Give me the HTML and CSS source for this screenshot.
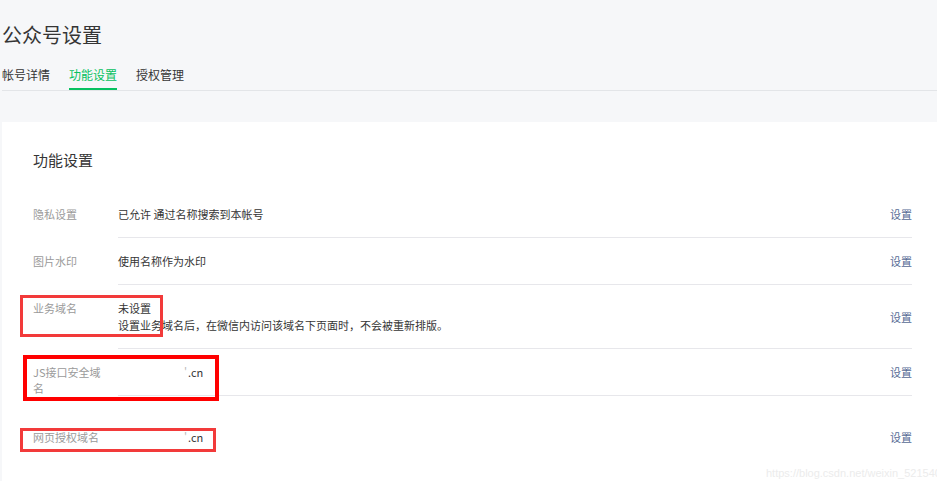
FILE: index.html
```html
<!DOCTYPE html>
<html lang="zh-CN">
<head>
<meta charset="utf-8">
<title>公众号设置</title>
<link rel="stylesheet" href="styles.css">
</head>
<body>
<div class="page">
  <h1 class="title">公众号设置</h1>
  <nav class="tabs">
    <a class="tab">帐号详情</a>
    <a class="tab active">功能设置</a>
    <a class="tab">授权管理</a>
  </nav>
  <section class="card">
    <h2 class="card-title">功能设置</h2>
    <div class="row">
      <div class="label">隐私设置</div>
      <div class="content">
        <div class="value">已允许 通过名称搜索到本帐号</div>
        <a class="link">设置</a>
      </div>
    </div>
    <div class="row">
      <div class="label">图片水印</div>
      <div class="content">
        <div class="value">使用名称作为水印</div>
        <a class="link">设置</a>
      </div>
    </div>
    <div class="row">
      <div class="label">业务域名</div>
      <div class="content">
        <div class="value multi">未设置<br>设置业务域名后，在微信内访问该域名下页面时，不会被重新排版。</div>
        <a class="link">设置</a>
      </div>
    </div>
    <div class="row">
      <div class="label wrap">JS接口安全域名</div>
      <div class="content">
        <div class="value domain"><span class="cut">'</span>.cn</div>
        <a class="link">设置</a>
      </div>
    </div>
    <div class="row last">
      <div class="label">网页授权域名</div>
      <div class="content">
        <div class="value domain"><span class="cut">'</span>.cn</div>
        <a class="link">设置</a>
      </div>
    </div>
  </section>
  <div class="mark mark1"></div>
  <div class="mark mark2"></div>
  <div class="mark mark3"></div>
  <div class="watermark">https://blog.csdn.net/weixin_52154077</div>
</div>
</body>
</html>
```
FILE: styles.css
```css
html, body {
  margin: 0;
  padding: 0;
  background: #f6f7f9;
  height: 100%;
  overflow: hidden;
}
body {
  font-family: "Noto Sans CJK SC", "Noto Sans", "Liberation Sans", sans-serif;
  color: #353535;
}
.page {
  position: relative;
  display: flex;
  flex-direction: column;
  padding: 21px 0 0 2px;
  height: 481px;
  box-sizing: border-box;
  overflow: hidden;
}
.title {
  margin: 0;
  font-size: 20px;
  line-height: 28px;
  font-weight: 400;
  color: #353535;
}
.tabs {
  display: flex;
  gap: 19px;
  margin-top: 17px;
  border-bottom: 1px solid #e3e5e8;
}
.tab {
  font-size: 12px;
  line-height: 18px;
  padding-bottom: 4px;
  border-bottom: 2px solid transparent;
  color: #353535;
}
.tab.active {
  color: #07c160;
  border-bottom-color: #07c160;
}
.card {
  flex: 1;
  margin-top: 31px;
  background: #fff;
  padding: 27px 25px 0 31px;
}
.card-title {
  margin: 0 0 20px;
  font-size: 15px;
  line-height: 22px;
  font-weight: 400;
  color: #353535;
}
.row {
  display: flex;
  align-items: flex-start;
  font-size: 11px;
  line-height: 16px;
}
.label {
  width: 70px;
  margin-right: 15px;
  padding: 15px 0;
  color: #9a9a9a;
}
.label.wrap {
  padding-bottom: 18px;
}
.content {
  flex: 1;
  display: flex;
  align-items: center;
  justify-content: space-between;
  padding: 15px 0;
  border-bottom: 1px solid #e7e7eb;
}
.row.last .content {
  border-bottom: none;
}
.value {
  color: #353535;
}
.value.multi {
  line-height: 16.5px;
}
.domain {
  padding-left: 66px;
}
.cut {
  color: #bbb;
  margin-right: 1px;
}
.link {
  color: #576b95;
}
.mark {
  position: absolute;
  box-sizing: border-box;
}
.mark1 {
  left: 20px;
  top: 295px;
  width: 143px;
  height: 42px;
  border: 3px solid #f23a3a;
}
.mark2 {
  left: 23px;
  top: 355px;
  width: 196px;
  height: 46px;
  border: 4px solid #ff0000;
}
.mark3 {
  left: 20px;
  top: 428px;
  width: 196px;
  height: 24px;
  border: 3px solid #f23a3a;
}
.watermark {
  position: absolute;
  left: 766px;
  top: 467px;
  font-family: "Liberation Sans", sans-serif;
  font-size: 11px;
  line-height: 13px;
  color: #ececec;
  white-space: nowrap;
}
```
